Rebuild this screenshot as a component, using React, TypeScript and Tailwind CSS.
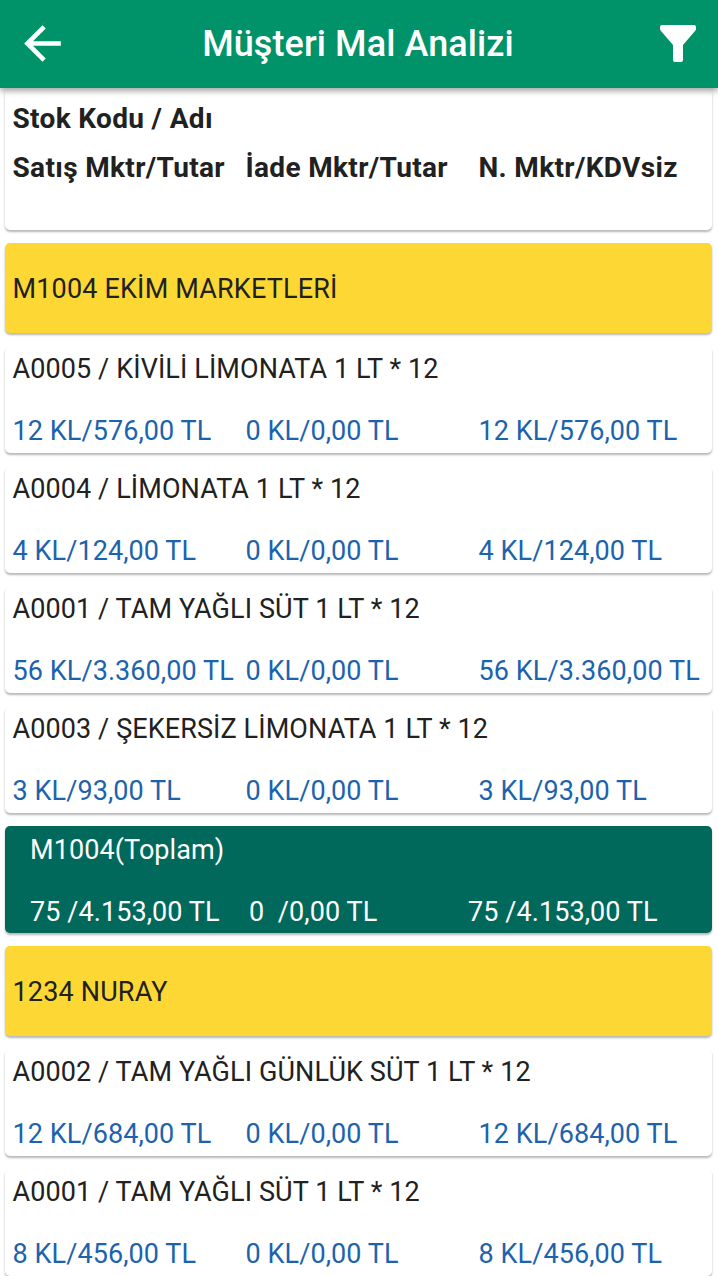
import type { ReactNode } from "react";

const card =
  "rounded-[5px] bg-white shadow-[0_2px_2px_rgba(0,0,0,0.2),0_2px_3px_rgba(0,0,0,0.1)]";

type Row = { name: string; sale: string; ret: string; net: string };

const ekim: Row[] = [
  { name: "A0005 / KİVİLİ LİMONATA 1 LT * 12", sale: "12 KL/576,00 TL", ret: "0 KL/0,00 TL", net: "12 KL/576,00 TL" },
  { name: "A0004 / LİMONATA 1 LT * 12", sale: "4 KL/124,00 TL", ret: "0 KL/0,00 TL", net: "4 KL/124,00 TL" },
  { name: "A0001 / TAM YAĞLI SÜT 1 LT * 12", sale: "56 KL/3.360,00 TL", ret: "0 KL/0,00 TL", net: "56 KL/3.360,00 TL" },
  { name: "A0003 / ŞEKERSİZ LİMONATA 1 LT * 12", sale: "3 KL/93,00 TL", ret: "0 KL/0,00 TL", net: "3 KL/93,00 TL" },
];

const nuray: Row[] = [
  { name: "A0002 / TAM YAĞLI GÜNLÜK SÜT 1 LT * 12", sale: "12 KL/684,00 TL", ret: "0 KL/0,00 TL", net: "12 KL/684,00 TL" },
  { name: "A0001 / TAM YAĞLI SÜT 1 LT * 12", sale: "8 KL/456,00 TL", ret: "0 KL/0,00 TL", net: "8 KL/456,00 TL" },
];

function Group({ children }: { children: ReactNode }) {
  return (
    <div className={`${card} mb-[13px] flex h-[90px] items-center bg-[#fdd835]! px-2 pt-[2px] tracking-[0.17px]`}>
      {children}
    </div>
  );
}

function Item({ row }: { row: Row }) {
  return (
    <div className={`${card} mb-[13px] h-[107px] px-2 pt-[7px]`}>
      <p className="tracking-[0.1px]">{row.name}</p>
      <div className="mt-[30px] grid grid-cols-[233px_233px_1fr] text-[#1c63ae]">
        <span>{row.sale}</span>
        <span>{row.ret}</span>
        <span>{row.net}</span>
      </div>
    </div>
  );
}

export default function App() {
  return (
    <div className="h-[1276px] w-[718px] overflow-hidden bg-white font-[Roboto,sans-serif] text-[27px] leading-8 tracking-[0.08px] whitespace-pre text-[#212121]">
      <header className="relative z-10 flex h-[88px] items-center bg-[#009268] pr-[22px] pb-[2px] pl-[15px] text-white shadow-[0_3px_6px_rgba(0,0,0,0.36)]">
        <svg className="size-[55px]" viewBox="0 0 24 24" fill="currentColor">
          <path d="M20 11H7.83l5.59-5.59L12 4l-8 8 8 8 1.41-1.41L7.83 13H20v-2z" />
        </svg>
        <h1 className="flex-1 pt-[2px] pr-[14px] text-center text-[36px] font-medium tracking-[0.1px]">
          Müşteri Mal Analizi
        </h1>
        <svg className="h-[37px] w-[36px]" viewBox="0 0 36 37" fill="currentColor">
          <path d="M2 0H34Q36 0 36 2V4Q36 5 35 6L23 20V35Q23 37 21 37H15Q13 37 13 35V20L1 6Q0 5 0 4V2Q0 0 2 0Z" />
        </svg>
      </header>
      <main className="pr-[6px] pl-[4.5px]">
        <div className={`${card} mb-[13px] h-[142px] px-2 pt-[15px] text-[28px] font-bold tracking-[0.34px]`}>
          <p>Stok Kodu / Adı</p>
          <div className="mt-[17px] grid grid-cols-[233px_233px_1fr]">
            <span>Satış Mktr/Tutar</span>
            <span>İade Mktr/Tutar</span>
            <span>N. Mktr/KDVsiz</span>
          </div>
        </div>
        <Group>M1004 EKİM MARKETLERİ</Group>
        {ekim.map((row) => (
          <Item key={row.name} row={row} />
        ))}
        <div className={`${card} mb-[13px] h-[107px] bg-[#00695c]! px-[25.5px] pt-2 text-white`}>
          <p>M1004(Toplam)</p>
          <div className="mt-[30px] grid grid-cols-[219px_219px_1fr]">
            <span>75 /4.153,00 TL</span>
            <span>{"0  /0,00 TL"}</span>
            <span>75 /4.153,00 TL</span>
          </div>
        </div>
        <Group>1234 NURAY</Group>
        {nuray.map((row) => (
          <Item key={row.name} row={row} />
        ))}
      </main>
    </div>
  );
}
